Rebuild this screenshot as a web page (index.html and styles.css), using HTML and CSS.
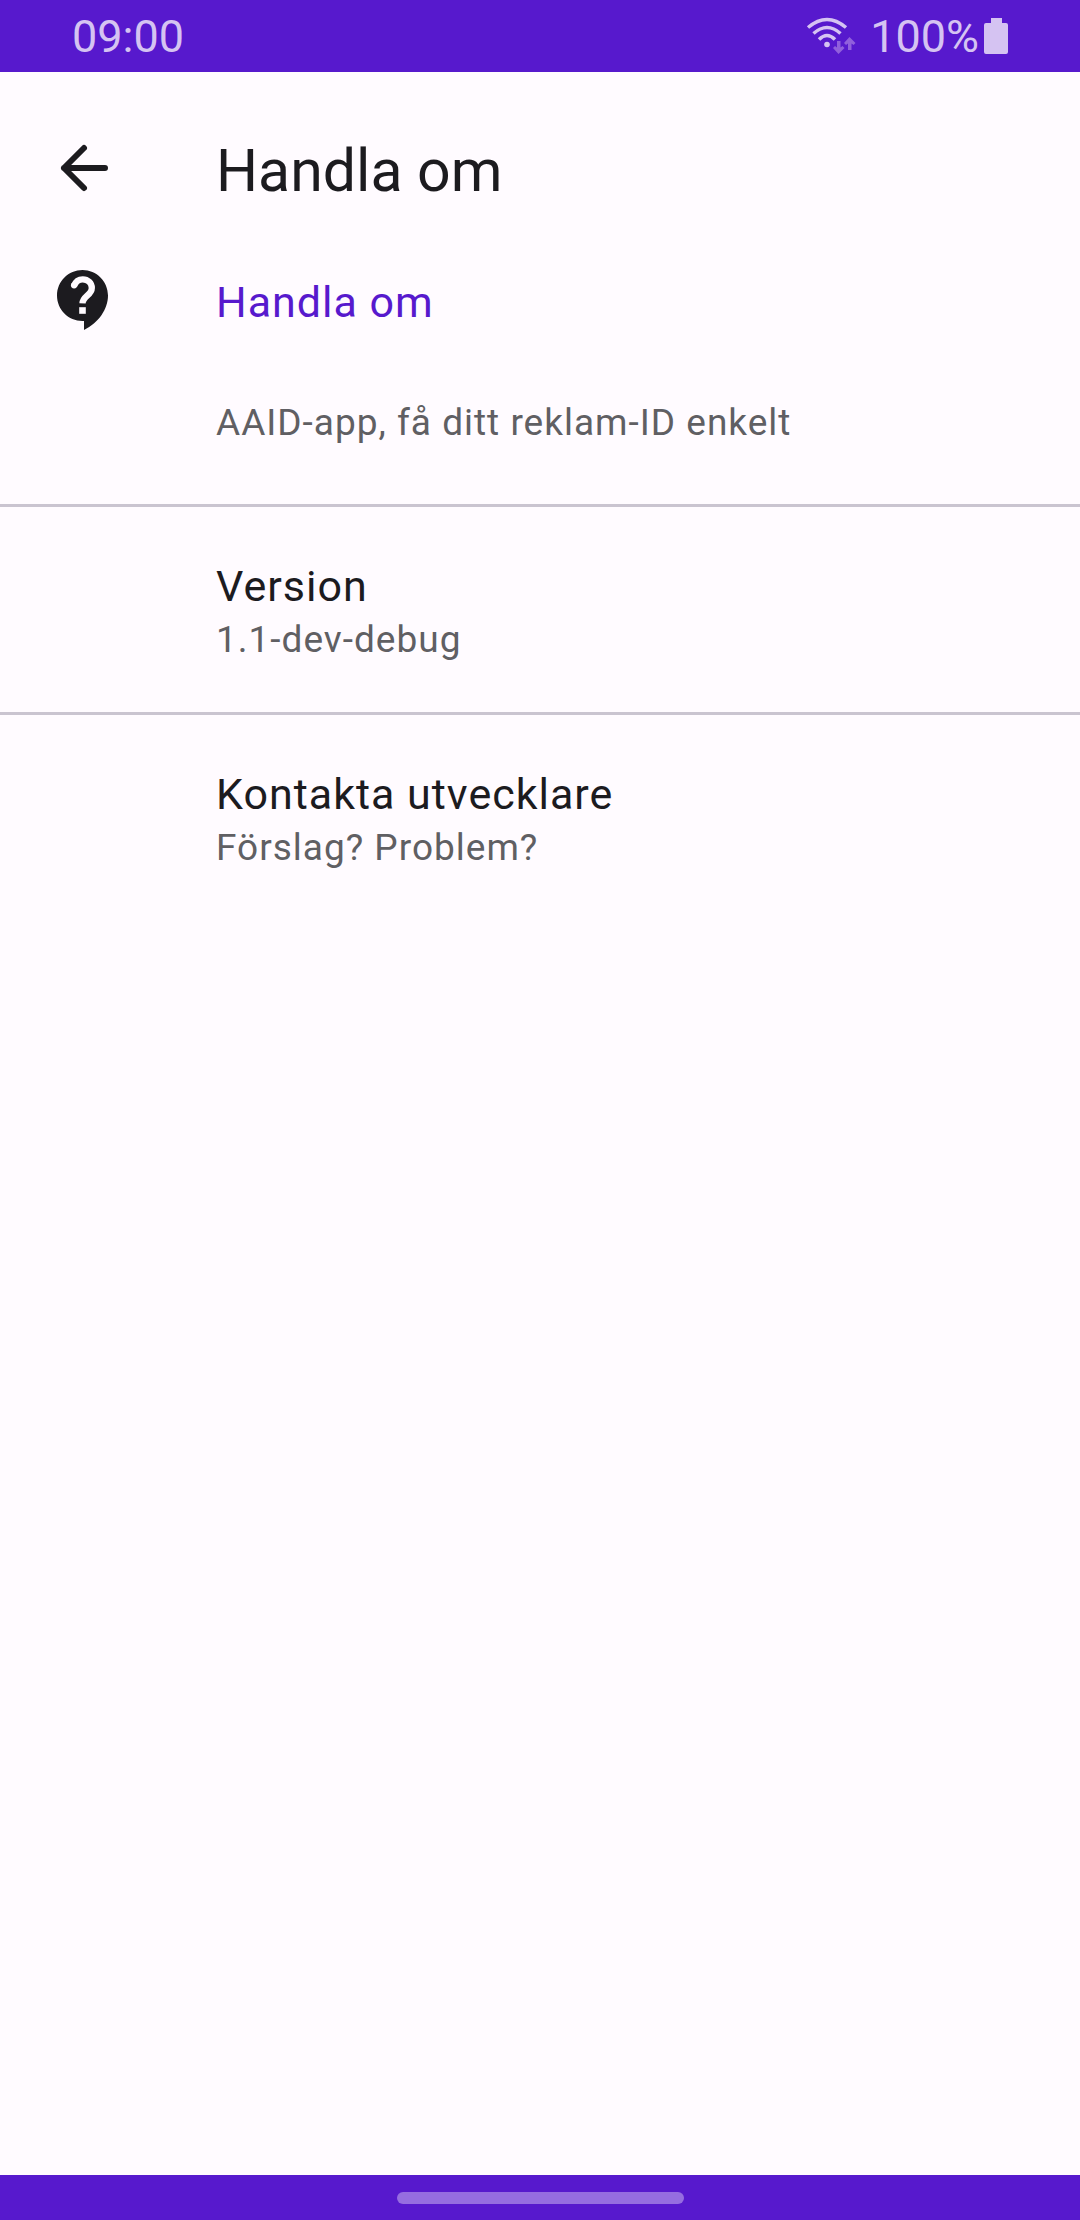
FILE: index.html
```html
<!DOCTYPE html>
<html lang="sv">
<head>
<meta charset="utf-8">
<meta name="viewport" content="width=device-width, initial-scale=1">
<title>Handla om</title>
<link rel="stylesheet" href="styles.css">
</head>
<body>
<div class="screen">
  <div class="status-bar">
    <time class="clock">09:00</time>
    <div class="status-icons">
      <svg class="wifi" viewBox="0 0 50 40" aria-hidden="true">
        <g fill="none" stroke="#d5c3f2" stroke-width="3.500">
          <path d="M2 10.500Q21 -5.500 40 10.500"/>
          <path d="M7.500 16.500Q21 4.500 34.500 16.500"/>
          <path d="M13 22.500Q21 14.500 29 22.500"/>
        </g>
        <circle cx="21" cy="27.500" r="2.800" fill="#d5c3f2"/>
        <path fill="#9160dc" d="M31 24h3.500v6.500l2-1.500 2 2-6 6-5.500-6 2-2 2 1.500zM42 33h3.500v-6.500l2 1.500 2-2-6-6-5.500 6 2 2 2-1.500z"/>
      </svg>
      <span class="battery-level">100%</span>
      <svg class="battery" viewBox="0 0 24 36" aria-hidden="true">
        <path fill="#d5c3f2" d="M7 0h11v5h4q2 0 2 2v27q0 2-2 2H2q-2 0-2-2V7q0-2 2-2h5z"/>
      </svg>
    </div>
  </div>

  <header class="app-bar">
    <button class="back" type="button" aria-label="Tillbaka">
      <svg class="icon" viewBox="0 0 72 72" aria-hidden="true">
        <path fill="none" stroke="#1c1b1f" stroke-width="6" stroke-linecap="round" stroke-linejoin="round" d="M57 36H16M36 16L16 36l20 20"/>
      </svg>
    </button>
    <h1 class="title">Handla om</h1>
  </header>

  <main class="content">
    <section class="about">
      <svg class="icon" viewBox="0 0 24 24" aria-hidden="true">
        <path fill="#1c1b1f" d="M11.500 2C6.810 2 3 5.810 3 10.500S6.810 19 11.500 19h.5v3c4.860-2.340 8-7 8-11.500C20 5.810 16.190 2 11.500 2z"/>
        <path fill="none" stroke="#fffbff" stroke-width="2.100" stroke-linejoin="round" d="M8.700 7.200C9.200 5.900 10.300 5.100 11.600 5.100c1.700 0 3 1.300 3 2.900 0 2.400-3 2.700-3.100 5.100"/>
        <circle cx="8.700" cy="7.100" r="1.050" fill="#fffbff"/>
        <path fill="#fffbff" d="M10.400 14.400h2.200v2.200h-2.200z"/>
      </svg>
      <h2 class="heading accent">Handla om</h2>
      <p class="summary lead">AAID-app, få ditt reklam-ID enkelt</p>
    </section>
    <section class="item">
      <h2 class="heading">Version</h2>
      <p class="summary">1.1-dev-debug</p>
    </section>
    <a class="item" href="#kontakt">
      <span class="heading">Kontakta utvecklare</span>
      <span class="summary">Förslag? Problem?</span>
    </a>
  </main>

  <div class="nav-bar"><div class="handle"></div></div>
</div>
</body>
</html>
```
FILE: styles.css
```css
* {
  box-sizing: border-box;
}

body {
  margin: 0;
  background: #fffbff;
  color: #1c1b1f;
  font-family: Roboto, "Noto Sans", sans-serif;
}

h1, h2, p {
  margin: 0;
  font-weight: 400;
}

.screen {
  display: flex;
  flex-direction: column;
  min-height: 100vh;
}

.status-bar {
  display: flex;
  justify-content: space-between;
  align-items: center;
  height: 72px;
  padding: 2px 72px 0;
  background: #5719cd;
  color: #d5c3f2;
  font-size: 45px;
  line-height: 54px;
}

.status-icons {
  display: flex;
  align-items: center;
}

.wifi {
  width: 50px;
  height: 40px;
  margin-right: 14px;
}

.battery {
  width: 24px;
  height: 36px;
  margin: 0 0 2px 5px;
}

.app-bar {
  display: grid;
  grid-template-columns: 168px 1fr;
  align-items: center;
  height: 192px;
  padding-left: 48px;
}

.back {
  width: 72px;
  height: 72px;
  padding: 0;
  border: 0;
  background: none;
  cursor: pointer;
}

.icon {
  display: block;
  width: 72px;
  height: 72px;
}

.title {
  padding-top: 6px;
  font-size: 59px;
  line-height: 72px;
}

.content {
  flex: 1;
}

.about {
  display: grid;
  grid-template-columns: 168px 1fr;
  padding: 0 48px 54px;
}

.heading {
  font-size: 43px;
  line-height: 54px;
  letter-spacing: 1px;
}

.accent {
  padding-top: 3px;
  color: #5719cd;
  align-self: center;
}

.summary {
  color: #605f63;
  font-size: 37px;
  line-height: 54px;
  letter-spacing: 1px;
}

.lead {
  grid-column: 2;
  margin-top: 60px;
}

.item {
  display: flex;
  flex-direction: column;
  padding: 52px 48px 45px 216px;
  border-top: 3px solid #cac4d0;
  color: inherit;
  text-decoration: none;
}

.nav-bar {
  display: flex;
  justify-content: center;
  align-items: center;
  height: 45px;
  background: #5719cd;
}

.handle {
  width: 287px;
  height: 12px;
  border-radius: 6px;
  background: #966de0;
}
```
